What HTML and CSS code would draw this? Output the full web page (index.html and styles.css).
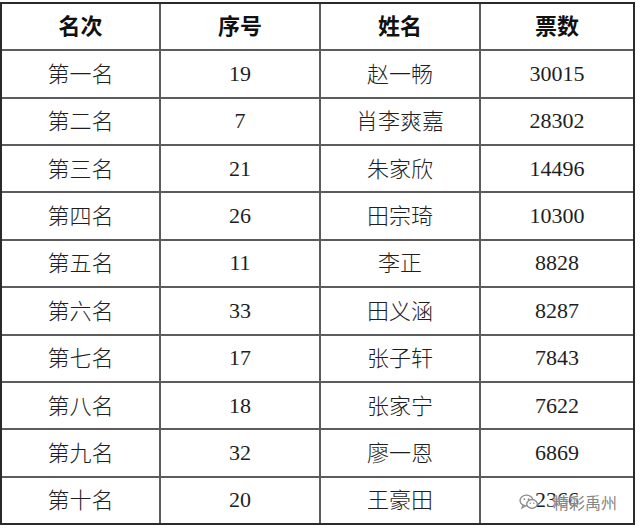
FILE: index.html
```html
<!DOCTYPE html>
<html lang="zh">
<head>
<meta charset="utf-8">
<link rel="stylesheet" href="styles.css">
</head>
<body>
<div class="sheet">
  <div class="grid">
    <div class="cell head">名次</div><div class="cell head">序号</div><div class="cell head">姓名</div><div class="cell head">票数</div>
    <div class="cell">第一名</div><div class="cell num">19</div><div class="cell">赵一畅</div><div class="cell num">30015</div>
    <div class="cell">第二名</div><div class="cell num">7</div><div class="cell">肖李爽嘉</div><div class="cell num">28302</div>
    <div class="cell">第三名</div><div class="cell num">21</div><div class="cell">朱家欣</div><div class="cell num">14496</div>
    <div class="cell">第四名</div><div class="cell num">26</div><div class="cell">田宗琦</div><div class="cell num">10300</div>
    <div class="cell">第五名</div><div class="cell num">11</div><div class="cell">李正</div><div class="cell num">8828</div>
    <div class="cell">第六名</div><div class="cell num">33</div><div class="cell">田义涵</div><div class="cell num">8287</div>
    <div class="cell">第七名</div><div class="cell num">17</div><div class="cell">张子轩</div><div class="cell num">7843</div>
    <div class="cell">第八名</div><div class="cell num">18</div><div class="cell">张家宁</div><div class="cell num">7622</div>
    <div class="cell">第九名</div><div class="cell num">32</div><div class="cell">廖一恩</div><div class="cell num">6869</div>
    <div class="cell">第十名</div><div class="cell num">20</div><div class="cell">王豪田</div><div class="cell num">2366</div>
  </div>
  <div class="watermark">
    <svg class="wm-icon" width="20" height="16" viewBox="0 0 20 16">
      <ellipse cx="7.5" cy="6.5" rx="6.5" ry="5.3" fill="none" stroke="#8a8a8a" stroke-width="1.3"/>
      <path d="M4 11 L3 14 L6.5 11.8" fill="none" stroke="#8a8a8a" stroke-width="1.2"/>
      <ellipse cx="13" cy="10" rx="5.3" ry="4.3" fill="#fff" stroke="#8a8a8a" stroke-width="1.3"/>
      <circle cx="5.3" cy="5.2" r="0.9" fill="#8a8a8a"/>
      <circle cx="9.5" cy="5.2" r="0.9" fill="#8a8a8a"/>
      <circle cx="11.3" cy="9.3" r="0.8" fill="#8a8a8a"/>
      <circle cx="14.8" cy="9.3" r="0.8" fill="#8a8a8a"/>
    </svg>
    <span class="wm-text">精彩禹州</span>
  </div>
</div>
</body>
</html>
```
FILE: styles.css
```css
html, body {
  margin: 0;
  padding: 0;
  background: #ffffff;
}
.sheet {
  position: relative;
  width: 640px;
  height: 528px;
  padding-top: 2px;
  box-sizing: border-box;
}
.grid {
  width: 635px;
  height: 523px;
  box-sizing: border-box;
  border: 2px solid #2a2a2a;
  background: #5c5c5c;
  display: grid;
  grid-template-columns: 157px 158px 158px 1fr;
  grid-template-rows: repeat(11, 1fr);
  gap: 2px;
}
.cell {
  background: #ffffff;
  display: flex;
  align-items: center;
  justify-content: center;
  box-sizing: border-box;
  padding-bottom: 4px;
  font-family: "Liberation Serif", "Noto Sans CJK SC", serif;
  font-size: 22px;
  font-weight: 300;
  color: #1e1e1e;
}
.cell.head {
  font-weight: 700;
  color: #111111;
  padding-bottom: 5px;
}
.cell.num {
  font-family: "Liberation Serif", serif;
  font-weight: 400;
  font-size: 22px;
  padding-bottom: 0;
}
.watermark {
  position: absolute;
  left: 519px;
  top: 490px;
  display: flex;
  align-items: center;
  gap: 14px;
}
.wm-icon {
  display: block;
}
.wm-text {
  font-family: "Noto Sans CJK SC", sans-serif;
  font-size: 16px;
  color: #858585;
  letter-spacing: 0;
  text-shadow: 0 0 2px #fff, 0 0 2px #fff;
}
```
